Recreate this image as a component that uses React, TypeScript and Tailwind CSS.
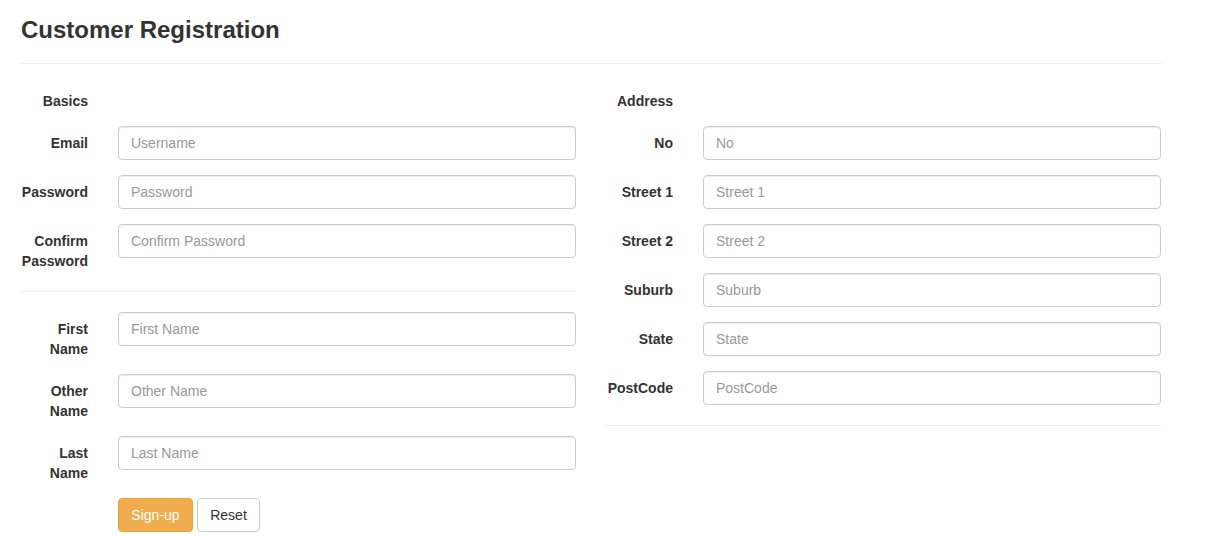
import React from 'react';

type Field = { label: string; placeholder: string; type?: string };

const basics: Field[] = [
  { label: 'Email', placeholder: 'Username', type: 'email' },
  { label: 'Password', placeholder: 'Password', type: 'password' },
  { label: 'Confirm Password', placeholder: 'Confirm Password', type: 'password' },
];

const names: Field[] = [
  { label: 'First Name', placeholder: 'First Name' },
  { label: 'Other Name', placeholder: 'Other Name' },
  { label: 'Last Name', placeholder: 'Last Name' },
];

const address: Field[] = [
  { label: 'No', placeholder: 'No' },
  { label: 'Street 1', placeholder: 'Street 1' },
  { label: 'Street 2', placeholder: 'Street 2' },
  { label: 'Suburb', placeholder: 'Suburb' },
  { label: 'State', placeholder: 'State' },
  { label: 'PostCode', placeholder: 'PostCode' },
];

function FormRow({ field }: { field: Field }) {
  return (
    <div className="flex items-start mb-[15px]">
      <label className="w-[67px] shrink-0 text-right font-bold pt-[7px] leading-5">{field.label}</label>
      <input
        type={field.type ?? 'text'}
        placeholder={field.placeholder}
        className="ml-[30px] flex-1 min-w-0 h-[34px] px-3 py-[6px] border border-[#ccc] rounded-[4px] bg-white text-[14px] text-[#555] placeholder:text-[#999] shadow-[inset_0_1px_1px_rgba(0,0,0,0.075)] outline-none"
      />
    </div>
  );
}

function SectionLabel({ text }: { text: string }) {
  return (
    <div className="flex mb-[15px]">
      <label className="w-[67px] shrink-0 text-right font-bold pt-[7px] leading-5">{text}</label>
    </div>
  );
}

export default function App() {
  return (
    <div className="min-h-screen bg-white text-[#333] text-[14px] leading-5 font-['Liberation_Sans',Arial,sans-serif]">
      <div className="w-[1140px] ml-[21px]">
        {/* Page header */}
        <div className="pt-[17px] pb-[20px] border-b border-[#eee]">
          <h3 className="text-[24px] font-bold leading-[26px]">Customer Registration</h3>
        </div>

        <div className="flex gap-[30px] mt-[20px]">
          {/* Left column */}
          <div className="w-[555px]">
            <SectionLabel text="Basics" />
            {basics.map(f => <FormRow key={f.label} field={f} />)}
            <hr className="my-5 border-[#eee]" />
            {names.map(f => <FormRow key={f.label} field={f} />)}
            <div className="ml-[97px] flex gap-1">
              <button className="w-[75px] h-[34px] py-[6px] rounded-[4px] bg-[#f0ad4e] border border-[#eea236] text-white">
                Sign-up
              </button>
              <button className="w-[63px] h-[34px] py-[6px] rounded-[4px] bg-white border border-[#ccc] text-[#333]">
                Reset
              </button>
            </div>
          </div>

          {/* Right column */}
          <div className="w-[555px]">
            <SectionLabel text="Address" />
            {address.map(f => <FormRow key={f.label} field={f} />)}
            <hr className="my-5 border-[#eee]" />
          </div>
        </div>
      </div>
    </div>
  );
}
